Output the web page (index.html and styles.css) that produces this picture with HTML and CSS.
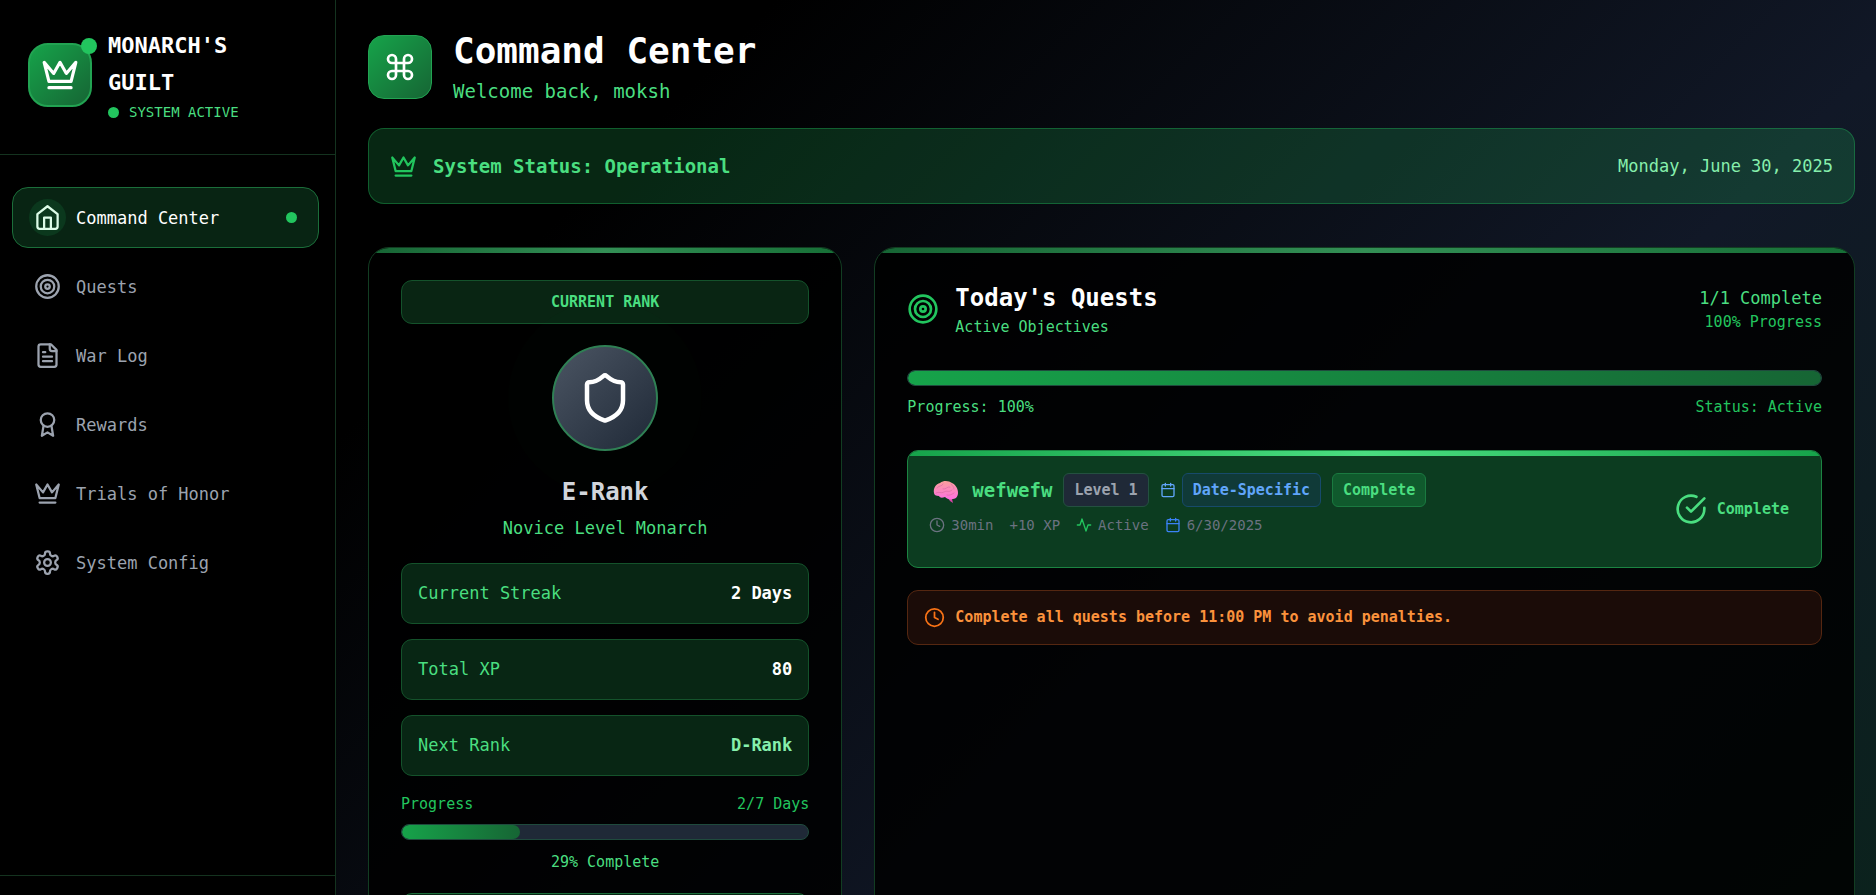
FILE: index.html
```
<!DOCTYPE html>
<html lang="en">
<head>
	<meta charset="utf-8">
	<title>Command Center</title>
	<meta name="viewport" content="width=device-width, initial-scale=1">
	<link rel="stylesheet" href="styles.css">
</head>
<body>
	<!-- shared icons -->
	<svg class="sprite" aria-hidden="true">
		<symbol id="crown" viewBox="0 0 24 24">
			<path d="m2 4 3 12h14l3-12-6 7-4-7-4 7-6-7zm3 16h14"/>
		</symbol>
		<symbol id="target" viewBox="0 0 24 24">
			<circle cx="12" cy="12" r="10"/>
			<circle cx="12" cy="12" r="6"/>
			<circle cx="12" cy="12" r="2"/>
		</symbol>
		<symbol id="calendar" viewBox="0 0 24 24">
			<rect x="3" y="4" width="18" height="18" rx="2"/>
			<path d="M8 2v4M16 2v4M3 10h18"/>
		</symbol>
		<symbol id="clock" viewBox="0 0 24 24">
			<circle cx="12" cy="12" r="10"/>
			<path d="M12 6v6l4 2"/>
		</symbol>
	</svg>

	<div class="app">
		<aside class="sidebar">
			<div class="brand">
				<div class="logo">
					<svg class="icon icon-lg"><use href="#crown"/></svg>
					<span class="logo-dot"></span>
				</div>
				<div>
					<div class="brand-name">MONARCH'S<br>GUILT</div>
					<div class="brand-status"><span class="dot"></span>SYSTEM ACTIVE</div>
				</div>
			</div>
			<nav class="nav">
				<a href="#" class="nav-item active">
					<span class="nav-icon"><svg class="icon icon-md" viewBox="0 0 24 24"><path d="m3 9 9-7 9 7v11a2 2 0 0 1-2 2H5a2 2 0 0 1-2-2z"/><path d="M9 22V12h6v10"/></svg></span>
					<span>Command Center</span>
					<span class="dot"></span>
				</a>
				<a href="#" class="nav-item">
					<span class="nav-icon"><svg class="icon icon-md"><use href="#target"/></svg></span>
					<span>Quests</span>
				</a>
				<a href="#" class="nav-item">
					<span class="nav-icon"><svg class="icon icon-md" viewBox="0 0 24 24"><path d="M15 2H6a2 2 0 0 0-2 2v16a2 2 0 0 0 2 2h12a2 2 0 0 0 2-2V7z"/><path d="M14 2v4a2 2 0 0 0 2 2h4M10 9H8M16 13H8M16 17H8"/></svg></span>
					<span>War Log</span>
				</a>
				<a href="#" class="nav-item">
					<span class="nav-icon"><svg class="icon icon-md" viewBox="0 0 24 24"><circle cx="12" cy="8" r="6"/><path d="M15.477 12.89 17 22l-5-3-5 3 1.523-9.11"/></svg></span>
					<span>Rewards</span>
				</a>
				<a href="#" class="nav-item">
					<span class="nav-icon"><svg class="icon icon-md"><use href="#crown"/></svg></span>
					<span>Trials of Honor</span>
				</a>
				<a href="#" class="nav-item">
					<span class="nav-icon"><svg class="icon icon-md" viewBox="0 0 24 24"><path d="M12.22 2h-.44a2 2 0 0 0-2 2v.18a2 2 0 0 1-1 1.73l-.43.25a2 2 0 0 1-2 0l-.15-.08a2 2 0 0 0-2.73.73l-.22.38a2 2 0 0 0 .73 2.73l.15.1a2 2 0 0 1 1 1.72v.51a2 2 0 0 1-1 1.74l-.15.09a2 2 0 0 0-.73 2.73l.22.38a2 2 0 0 0 2.73.73l.15-.08a2 2 0 0 1 2 0l.43.25a2 2 0 0 1 1 1.73V20a2 2 0 0 0 2 2h.44a2 2 0 0 0 2-2v-.18a2 2 0 0 1 1-1.73l.43-.25a2 2 0 0 1 2 0l.15.08a2 2 0 0 0 2.73-.73l.22-.39a2 2 0 0 0-.73-2.73l-.15-.08a2 2 0 0 1-1-1.74v-.5a2 2 0 0 1 1-1.74l.15-.09a2 2 0 0 0 .73-2.73l-.22-.38a2 2 0 0 0-2.73-.73l-.15.08a2 2 0 0 1-2 0l-.43-.25a2 2 0 0 1-1-1.73V4a2 2 0 0 0-2-2z"/><circle cx="12" cy="12" r="3"/></svg></span>
					<span>System Config</span>
				</a>
			</nav>
			<div class="sidebar-footer"></div>
		</aside>

		<main class="main">
			<header class="page-header">
				<div class="page-icon">
					<svg class="icon icon-lg" viewBox="0 0 24 24"><path d="M15 6v12a3 3 0 1 0 3-3H6a3 3 0 1 0 3 3V6a3 3 0 1 0-3 3h12a3 3 0 1 0-3-3"/></svg>
				</div>
				<div>
					<h1>Command Center</h1>
					<p class="welcome">Welcome back, moksh</p>
				</div>
			</header>

			<section class="status-bar">
				<svg class="icon icon-md"><use href="#crown"/></svg>
				<strong>System Status: Operational</strong>
				<time datetime="2025-06-30">Monday, June 30, 2025</time>
			</section>

			<div class="columns">
				<section class="card rank-card">
					<div class="rank-label">CURRENT RANK</div>
					<div class="rank-badge">
						<svg class="icon icon-xl" viewBox="0 0 24 24"><path d="M20 13c0 5-3.5 7.5-7.66 8.95a1 1 0 0 1-.67-.01C7.5 20.5 4 18 4 13V6a1 1 0 0 1 1-1c2 0 4.5-1.2 6.24-2.72a1.17 1.17 0 0 1 1.52 0C14.51 3.81 17 5 19 5a1 1 0 0 1 1 1z"/></svg>
					</div>
					<h2 class="rank-name">E-Rank</h2>
					<p class="rank-title">Novice Level Monarch</p>
					<div class="stats">
						<div class="stat"><span>Current Streak</span><b>2 Days</b></div>
						<div class="stat"><span>Total XP</span><b>80</b></div>
						<div class="stat"><span>Next Rank</span><b class="next">D-Rank</b></div>
					</div>
					<div class="progress-row"><span>Progress</span><span>2/7 Days</span></div>
					<div class="progress"><div class="progress-fill" style="width: 29%"></div></div>
					<p class="progress-note">29% Complete</p>
					<div class="rank-more"></div>
				</section>

				<section class="card quest-card">
					<div class="quest-header">
						<svg class="icon icon-lg"><use href="#target"/></svg>
						<div>
							<h2>Today's Quests</h2>
							<p>Active Objectives</p>
						</div>
						<div class="quest-count">
							<div class="count">1/1 Complete</div>
							<div class="percent">100% Progress</div>
						</div>
					</div>
					<div class="progress"><div class="progress-fill" style="width: 100%"></div></div>
					<div class="progress-row quest-progress"><span class="bright">Progress: 100%</span><span>Status: Active</span></div>

					<article class="quest">
						<div class="quest-body">
							<div class="quest-title">
								<svg class="brain" viewBox="0 0 32 32" role="img" aria-label="Brain">
									<defs>
										<linearGradient id="pink" x1="0" y1="0" x2="0" y2="1">
											<stop offset="0" stop-color="#f9a09c"/>
											<stop offset="1" stop-color="#ff6fe0"/>
										</linearGradient>
									</defs>
									<path fill="#d944a8" d="M19 24l4 1 1 4-3-2z"/>
									<path fill="url(#pink)" d="M5 19c-1-5 2-9 6-10 4-3 9-2 12 0 4 2 6 6 6 10 0 3-2 6-5 6-3 1-6 0-8-2-3 1-5 1-6-1-3 0-5-1-5-3z"/>
									<path fill="none" stroke="#e070a8" stroke-width=".8" stroke-linecap="round" d="M8 14c2-3 5-1 6-4M14 15c3 1 4-3 7-2M7 19c3-2 5 1 8-1s5 1 8-2M18 21c3 1 5-1 7-2M22 10c1 2 3 2 3 5"/>
								</svg>
								<h3>wefwefw</h3>
								<span class="tag tag-level">Level 1</span>
								<span class="dated">
									<svg class="icon icon-sm"><use href="#calendar"/></svg>
									<span class="tag tag-date">Date-Specific</span>
								</span>
								<span class="tag tag-done">Complete</span>
							</div>
							<div class="quest-meta">
								<span><svg class="icon icon-sm"><use href="#clock"/></svg>30min</span>
								<span>+10 XP</span>
								<span><svg class="icon icon-sm green" viewBox="0 0 24 24"><path d="M22 12h-4l-3 9L9 3l-3 9H2"/></svg>Active</span>
								<span><svg class="icon icon-sm blue"><use href="#calendar"/></svg>6/30/2025</span>
							</div>
						</div>
						<div class="quest-state">
							<svg class="icon icon-lg" viewBox="0 0 24 24"><path d="M22 11.08V12a10 10 0 1 1-5.93-9.14"/><path d="m9 11 3 3L22 4"/></svg>
							Complete
						</div>
					</article>

					<div class="warning">
						<svg class="icon warning-icon"><use href="#clock"/></svg>
						Complete all quests before 11:00 PM to avoid penalties.
					</div>
				</section>
			</div>
		</main>
	</div>
</body>
</html>
```
FILE: styles.css
```
* {
	box-sizing: border-box;
}
body {
	margin: 0;
	font-family: "DejaVu Sans Mono", "Liberation Mono", monospace;
	font-size: 17px;
	line-height: 28px;
	color: #fff;
	background: #000;
}
h1, h2, h3, p {
	margin: 0;
}
.sprite {
	position: absolute;
	width: 0;
	height: 0;
}
.icon {
	flex: none;
	fill: none;
	stroke: currentColor;
	stroke-width: 2;
	stroke-linecap: round;
	stroke-linejoin: round;
}
.icon-sm {
	width: 16px;
	height: 16px;
}
.icon-md {
	width: 27px;
	height: 27px;
}
.icon-lg {
	width: 32px;
	height: 32px;
}
.icon-xl {
	width: 54px;
	height: 54px;
}
.dot {
	width: 11px;
	height: 11px;
	border-radius: 50%;
	background: #22c55e;
}
.app {
	display: flex;
	height: 100vh;
	overflow: hidden;
	background: linear-gradient(135deg, #000 28%, #111827 70%, #0b221d 100%);
}

/* sidebar */
.sidebar {
	display: flex;
	flex-direction: column;
	flex: none;
	width: 336px;
	background: #000;
	border-right: 1px solid #14331f;
}
.brand {
	display: flex;
	align-items: center;
	gap: 16px;
	padding: 27px 28px 31px;
	border-bottom: 1px solid #14331f;
}
.logo, .page-icon {
	position: relative;
	display: flex;
	align-items: center;
	justify-content: center;
	flex: none;
	width: 64px;
	height: 64px;
	border: 1px solid #22a352;
	border-radius: 16px;
	background: linear-gradient(135deg, #16a34a, #166534);
}
.logo {
	border-width: 2px;
	border-radius: 20px;
}
.logo .icon {
	width: 38px;
	height: 38px;
}
.logo-dot {
	position: absolute;
	top: -7px;
	right: -7px;
	width: 16px;
	height: 16px;
	border-radius: 50%;
	background: #22c55e;
}
.brand-name {
	font-size: 22px;
	font-weight: bold;
	line-height: 37px;
}
.brand-status {
	display: flex;
	align-items: center;
	gap: 10px;
	font-size: 14px;
	line-height: 22px;
	color: #4ade80;
}
.nav {
	display: flex;
	flex-direction: column;
	flex: 1;
	gap: 8px;
	padding: 32px 16px 32px 12px;
}
.nav-item {
	display: flex;
	align-items: center;
	gap: 10px;
	padding: 11px 21px 11px 16px;
	border: 1px solid transparent;
	border-radius: 16px;
	color: #9ca3af;
	text-decoration: none;
}
.nav-icon {
	display: flex;
	padding: 5px;
	border-radius: 50%;
}
.nav-item.active {
	color: #fff;
	border-color: #1b6e3a;
	background: #082413;
}
.active .nav-icon {
	color: #dcfce7;
	background: #0b381d;
}
.active .dot {
	margin-left: auto;
}
.sidebar-footer {
	height: 20px;
	border-top: 1px solid #14331f;
}

/* page top */
.main {
	flex: 1;
	min-width: 0;
	padding: 27px 21px 0 32px;
}
.page-header {
	display: flex;
	align-items: center;
	gap: 21px;
	height: 80px;
}
h1 {
	font-size: 36px;
	line-height: 48px;
}
.welcome {
	font-size: 19px;
	line-height: 32px;
	color: #4ade80;
}
.status-bar {
	display: flex;
	align-items: center;
	gap: 16px;
	height: 76px;
	margin-top: 21px;
	padding: 0 21px;
	border: 1px solid rgba(34, 197, 94, 0.35);
	border-radius: 16px;
	background: rgba(34, 197, 94, 0.2);
	color: #22c55e;
}
.status-bar strong {
	font-size: 19px;
	color: #4ade80;
}
.status-bar time {
	margin-left: auto;
	color: #86efac;
}

/* cards */
.columns {
	display: grid;
	grid-template-columns: repeat(3, 1fr);
	gap: 32px;
	margin-top: 43px;
	min-height: 900px;
}
.card {
	position: relative;
	overflow: hidden;
	padding: 32px;
	border: 1px solid #123d22;
	border-radius: 21px;
	background: rgba(0, 0, 0, 0.85);
}
.card::before, .quest::before {
	content: "";
	position: absolute;
	top: 0;
	left: 0;
	right: 0;
	height: 5px;
	background: linear-gradient(90deg, #166534, #338f55, #166f36);
}
.quest-card {
	grid-column: span 2;
}
.rank-card {
	text-align: center;
}
.rank-label {
	border: 1px solid #14522b;
	border-radius: 11px;
	background: #092513;
	font-size: 15px;
	font-weight: bold;
	line-height: 42px;
	color: #4ade80;
}
.rank-badge {
	display: flex;
	align-items: center;
	justify-content: center;
	width: 106px;
	height: 106px;
	margin: 21px auto;
	border: 2px solid #2f8054;
	border-radius: 50%;
	background: linear-gradient(135deg, #4b5563, #1f2937);
	box-shadow: 0 0 0 44px rgba(34, 197, 94, 0.01);
}
.rank-name {
	font-size: 24px;
	line-height: 40px;
	color: #d1d5db;
}
.rank-title {
	line-height: 32px;
	color: #4ade80;
}
.stats {
	display: flex;
	flex-direction: column;
	gap: 15px;
	margin-top: 19px;
}
.stat {
	display: flex;
	justify-content: space-between;
	padding: 16px;
	border: 1px solid #14522b;
	border-radius: 11px;
	background: #082614;
	line-height: 27px;
	color: #4ade80;
}
.stat b {
	color: #fff;
}
.stat .next {
	color: #86efac;
}
.progress-row {
	display: flex;
	justify-content: space-between;
	margin-top: 16px;
	font-size: 15px;
	line-height: 24px;
	color: #22c55e;
}
.progress-row .bright {
	color: #4ade80;
}
.progress {
	height: 16px;
	margin-top: 8px;
	overflow: hidden;
	border: 1px solid #1f4a3d;
	border-radius: 8px;
	background: #1f2937;
}
.progress-fill {
	height: 100%;
	border-radius: 8px;
	background: linear-gradient(90deg, #16a34a, #166534);
}
.progress-note {
	margin-top: 10px;
	font-size: 15px;
	line-height: 24px;
	color: #4ade80;
}
.rank-more {
	height: 60px;
	margin-top: 19px;
	border: 1px solid #1b6e3a;
	border-radius: 11px;
	background: #082614;
}

/* quests */
.quest-header {
	display: flex;
	align-items: center;
	gap: 16px;
	padding-bottom: 24px;
	color: #22c55e;
}
.quest-header h2 {
	font-size: 24px;
	line-height: 37px;
	color: #fff;
}
.quest-header p {
	font-size: 15px;
	line-height: 21px;
	color: #4ade80;
}
.quest-count {
	margin-left: auto;
	text-align: right;
}
.quest-count .count {
	line-height: 27px;
	color: #4ade80;
}
.quest-count .percent {
	font-size: 15px;
	line-height: 21px;
}
.quest-progress {
	margin-top: 9px;
}
.quest {
	position: relative;
	display: flex;
	align-items: flex-start;
	justify-content: space-between;
	margin-top: 31px;
	padding: 22px 32px 22px 21px;
	overflow: hidden;
	border: 1px solid #1c8442;
	border-radius: 11px;
	background: #0c3c20;
}
.quest::before {
	background: linear-gradient(90deg, #16a34a, #4ade80, #16a34a);
}
.quest-body {
	padding-bottom: 8px;
}
.quest-title, .quest-meta, .dated, .quest-meta span {
	display: flex;
	align-items: center;
}
.quest-title {
	gap: 11px;
}
.brain {
	width: 32px;
	height: 32px;
}
.quest-title h3 {
	font-size: 19px;
	color: #4ade80;
}
.dated {
	gap: 6px;
	color: #60a5fa;
}
.tag {
	padding: 0 10px;
	border: 1px solid;
	border-radius: 6px;
	font-size: 15px;
	font-weight: bold;
	line-height: 32px;
}
.tag-level {
	color: #9ca3af;
	background: #1f2937;
	border-color: #245040;
}
.tag-date {
	color: #60a5fa;
	background: #103a38;
	border-color: #174a6b;
}
.tag-done {
	color: #4ade80;
	background: #105a2d;
	border-color: #1a7a40;
}
.quest-meta {
	gap: 16px;
	margin-top: 6px;
	font-size: 14px;
	line-height: 24px;
	color: #6b7280;
}
.quest-meta span {
	gap: 6px;
}
.quest-meta .green {
	color: #22c55e;
}
.quest-meta .blue {
	color: #3b82f6;
}
.quest-state {
	display: flex;
	align-items: center;
	align-self: center;
	gap: 10px;
	font-size: 15px;
	font-weight: bold;
	color: #4ade80;
}
.warning {
	display: flex;
	align-items: center;
	gap: 10px;
	margin-top: 22px;
	padding: 13px 16px;
	border: 1px solid #552711;
	border-radius: 11px;
	background: #1b0c08;
	font-size: 15px;
	font-weight: bold;
	line-height: 27px;
	color: #fb923c;
}
.warning-icon {
	width: 21px;
	height: 21px;
	color: #f97316;
}
```
